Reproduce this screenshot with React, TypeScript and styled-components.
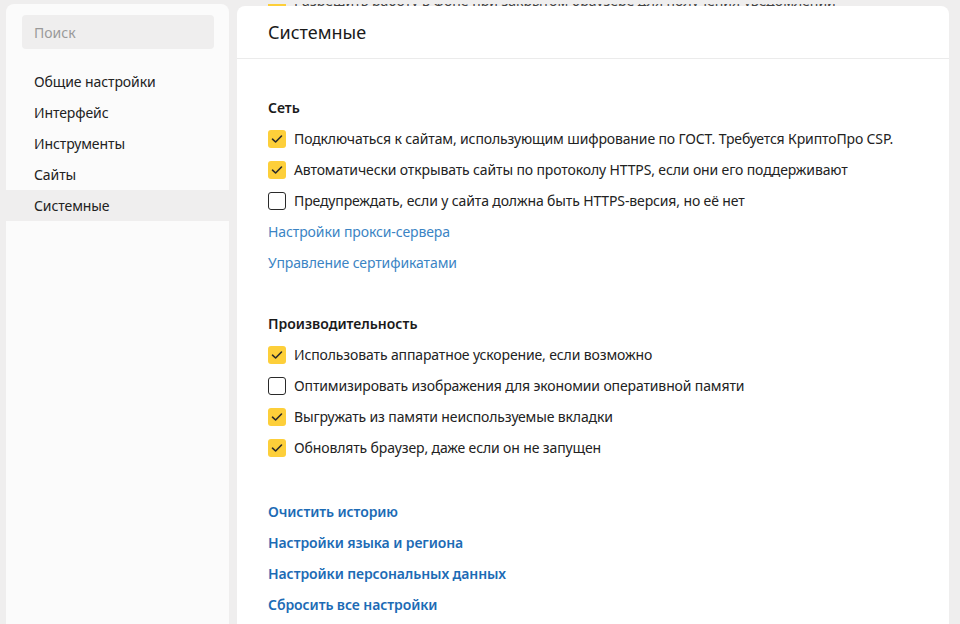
import React from "react";
import styled, { createGlobalStyle } from "styled-components";

const Global = createGlobalStyle`
  html, body { margin: 0; padding: 0; }
  body {
    background: #efeeee;
    font-family: "Noto Sans", "Open Sans", sans-serif;
    color: #1f1f1f;
  }
`;

const Page = styled.div`
  display: flex;
  gap: 8px;
  height: 624px;
  overflow: hidden;
  padding: 4px 11px 0 6px;
  box-sizing: border-box;
`;

const Sidebar = styled.aside`
  width: 223px;
  flex: none;
  background: #fbfbfb;
  border-radius: 8px 8px 0 0;
  padding-top: 11px;
  box-sizing: border-box;
`;

const Search = styled.div`
  margin: 0 15px 0 16px;
  height: 34px;
  border-radius: 4px;
  background: #efeeee;
  display: flex;
  align-items: center;
  padding-left: 12px;
  font-size: 14px;
  color: #9a9a9a;
`;

const Nav = styled.nav`
  margin-top: 17px;
  display: flex;
  flex-direction: column;
`;

const NavItem = styled.div<{ $active?: boolean }>`
  height: 31px;
  display: flex;
  align-items: center;
  padding-left: 28px;
  font-size: 14px;
  letter-spacing: -0.1px;
  color: #222;
  background: ${(p) => (p.$active ? "#efeeee" : "transparent")};
`;

const Main = styled.main`
  flex: 1;
  display: flex;
  flex-direction: column;
  min-width: 0;
`;

const Peek = styled.div`
  height: 2px;
  overflow: hidden;
  padding-left: 31px;
  display: flex;
  align-items: flex-end;
`;

const PeekInner = styled.div`
  display: flex;
  align-items: center;
  gap: 8px;
  height: 18px;
  margin-bottom: -3px;
  flex: none;
  font-size: 14px;
  color: #444;
  white-space: nowrap;
`;

const Card = styled.section`
  flex: 1;
  background: #fff;
  border-radius: 8px 8px 0 0;
  display: flex;
  flex-direction: column;
`;

const Header = styled.header`
  height: 52px;
  flex: none;
  display: flex;
  align-items: center;
  padding-left: 31px;
  border-bottom: 1px solid #ebebeb;
  font-size: 18px;
  color: #1a1a1a;
`;

const Body = styled.div`
  padding: 33px 31px 0;
  display: flex;
  flex-direction: column;
`;

const Section = styled.div<{ $gap?: number }>`
  display: flex;
  flex-direction: column;
  margin-bottom: ${(p) => p.$gap ?? 0}px;
`;

const Heading = styled.div`
  height: 31px;
  display: flex;
  align-items: center;
  font-size: 14px;
  font-weight: 600;
  color: #1a1a1a;
`;

const Row = styled.label`
  height: 31px;
  display: flex;
  align-items: center;
  gap: 8px;
  font-size: 14px;
  letter-spacing: -0.13px;
  color: #222;
`;

const Box = styled.span<{ $checked?: boolean }>`
  width: 18px;
  height: 18px;
  flex: none;
  box-sizing: border-box;
  border-radius: 3px;
  display: flex;
  align-items: center;
  justify-content: center;
  background: ${(p) => (p.$checked ? "#fdcf3a" : "#fff")};
  border: ${(p) => (p.$checked ? "none" : "1.5px solid #2a2a2a")};
`;

const Link = styled.a<{ $strong?: boolean }>`
  height: 31px;
  display: flex;
  align-items: center;
  font-size: 14px;
  letter-spacing: -0.1px;
  text-decoration: none;
  color: ${(p) => (p.$strong ? "#1c6bb5" : "#3b84c4")};
  font-weight: ${(p) => (p.$strong ? 600 : 400)};
`;

const Check = () => (
  <svg width="12" height="10" viewBox="0 0 12 10">
    <path d="M1.5 5.2 L4.6 8 L10.5 2" fill="none" stroke="#2a2a2a" strokeWidth="1.6" strokeLinecap="round" strokeLinejoin="round" />
  </svg>
);

const CheckRow = ({ checked, children }: { checked?: boolean; children: React.ReactNode }) => (
  <Row>
    <Box $checked={checked}>{checked && <Check />}</Box>
    {children}
  </Row>
);

export default function App() {
  const nav = ["Общие настройки", "Интерфейс", "Инструменты", "Сайты", "Системные"];
  return (
    <>
      <Global />
      <Page>
        <Sidebar>
          <Search>Поиск</Search>
          <Nav>
            {nav.map((n) => (
              <NavItem key={n} $active={n === "Системные"}>
                {n}
              </NavItem>
            ))}
          </Nav>
        </Sidebar>
        <Main>
          <Peek>
            <PeekInner>
              <Box $checked />
              Разрешить работу в фоне при закрытом браузере для получения уведомлений
            </PeekInner>
          </Peek>
          <Card>
            <Header>Системные</Header>
            <Body>
              <Section $gap={30}>
                <Heading>Сеть</Heading>
                <CheckRow checked>Подключаться к сайтам, использующим шифрование по ГОСТ. Требуется КриптоПро CSP.</CheckRow>
                <CheckRow checked>Автоматически открывать сайты по протоколу HTTPS, если они его поддерживают</CheckRow>
                <CheckRow>Предупреждать, если у сайта должна быть HTTPS-версия, но её нет</CheckRow>
                <Link>Настройки прокси-сервера</Link>
                <Link>Управление сертификатами</Link>
              </Section>
              <Section $gap={33}>
                <Heading>Производительность</Heading>
                <CheckRow checked>Использовать аппаратное ускорение, если возможно</CheckRow>
                <CheckRow>Оптимизировать изображения для экономии оперативной памяти</CheckRow>
                <CheckRow checked>Выгружать из памяти неиспользуемые вкладки</CheckRow>
                <CheckRow checked>Обновлять браузер, даже если он не запущен</CheckRow>
              </Section>
              <Section>
                <Link $strong>Очистить историю</Link>
                <Link $strong>Настройки языка и региона</Link>
                <Link $strong>Настройки персональных данных</Link>
                <Link $strong>Сбросить все настройки</Link>
              </Section>
            </Body>
          </Card>
        </Main>
      </Page>
    </>
  );
}
